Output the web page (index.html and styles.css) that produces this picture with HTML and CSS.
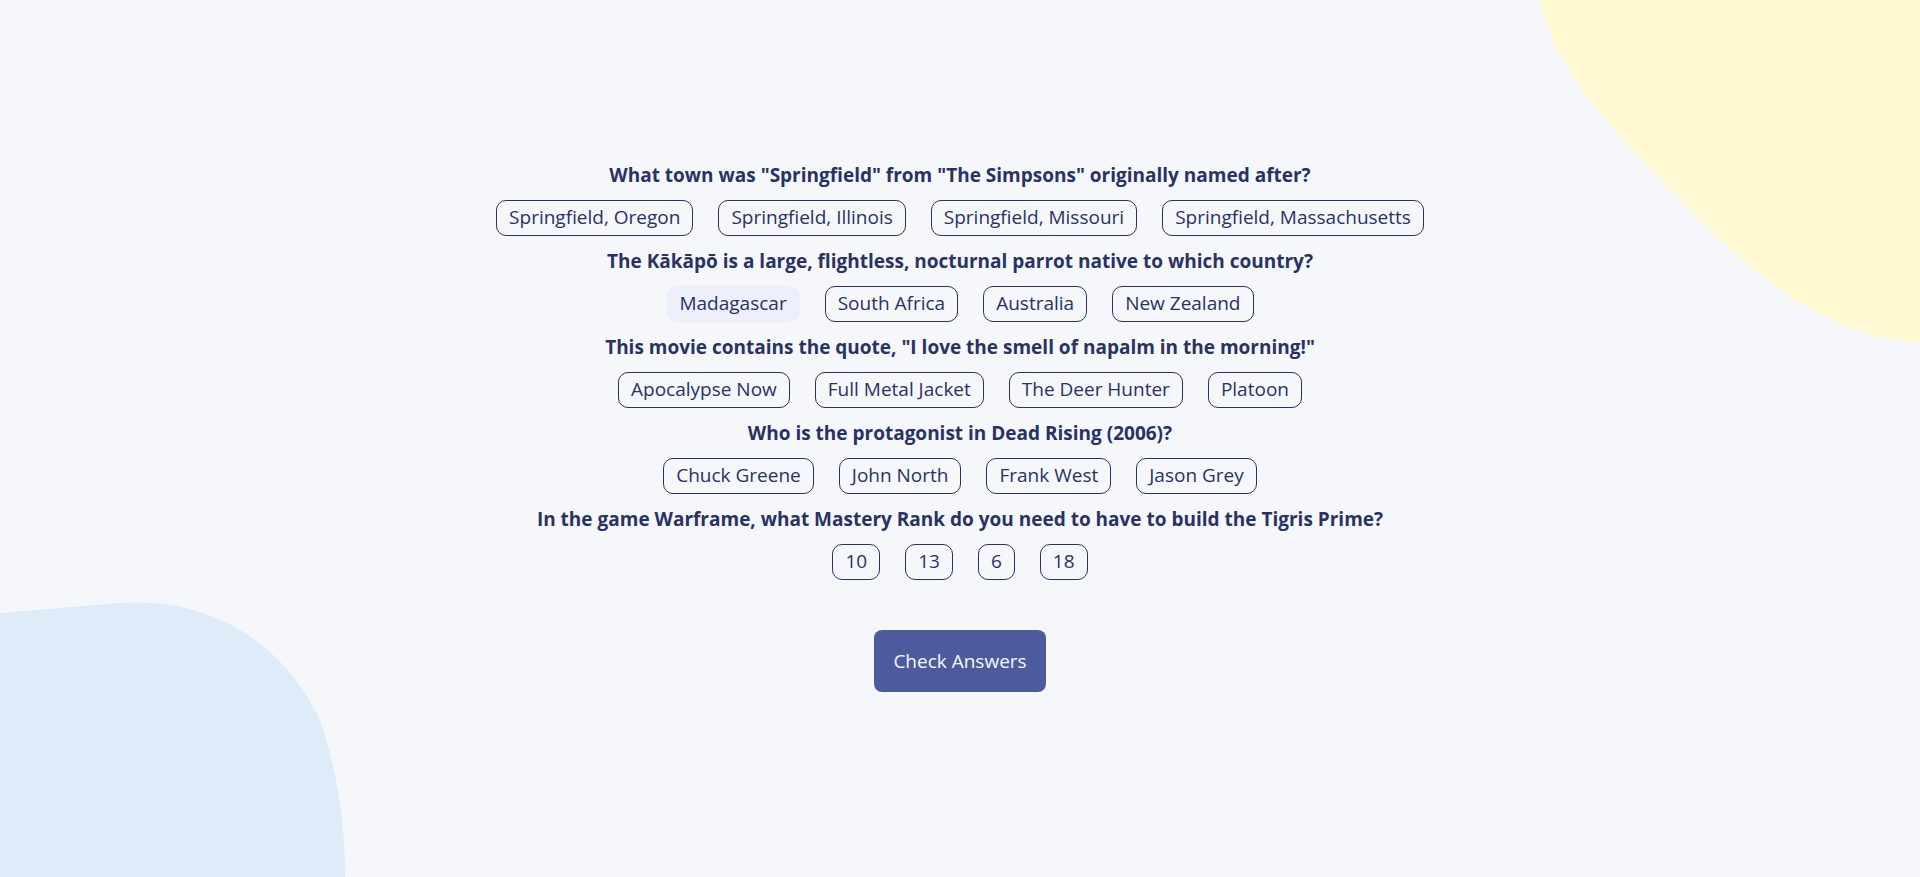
FILE: index.html
```html
<!DOCTYPE html>
<html lang="en">
<head>
<meta charset="utf-8">
<title>Quizzical</title>
<link rel="stylesheet" href="styles.css">
</head>
<body>
<svg class="blob blob-yellow" width="380" height="345" viewBox="1540 0 380 345" aria-hidden="true">
  <path d="M1540 0 C1556 80 1640 160 1720 240 C1790 305 1850 338 1920 342 L1920 0 Z" fill="#FFFAD1"/>
</svg>
<svg class="blob blob-blue" width="350" height="277" viewBox="0 600 350 277" aria-hidden="true">
  <path d="M0 613 L120 603 C150 601 260 598 320 720 C340 780 345 830 345 877 L0 877 Z" fill="#DEEBF8"/>
</svg>
<main class="quiz">
  <section class="question">
    <h2 class="q-title">What town was "Springfield" from "The Simpsons" originally named after?</h2>
    <div class="answers">
      <button class="answer">Springfield, Oregon</button>
      <button class="answer">Springfield, Illinois</button>
      <button class="answer">Springfield, Missouri</button>
      <button class="answer">Springfield, Massachusetts</button>
    </div>
  </section>
  <section class="question">
    <h2 class="q-title">The Kākāpō is a large, flightless, nocturnal parrot native to which country?</h2>
    <div class="answers">
      <button class="answer selected">Madagascar</button>
      <button class="answer">South Africa</button>
      <button class="answer">Australia</button>
      <button class="answer">New Zealand</button>
    </div>
  </section>
  <section class="question">
    <h2 class="q-title">This movie contains the quote, "I love the smell of napalm in the morning!"</h2>
    <div class="answers">
      <button class="answer">Apocalypse Now</button>
      <button class="answer">Full Metal Jacket</button>
      <button class="answer">The Deer Hunter</button>
      <button class="answer">Platoon</button>
    </div>
  </section>
  <section class="question">
    <h2 class="q-title">Who is the protagonist in Dead Rising (2006)?</h2>
    <div class="answers">
      <button class="answer">Chuck Greene</button>
      <button class="answer">John North</button>
      <button class="answer">Frank West</button>
      <button class="answer">Jason Grey</button>
    </div>
  </section>
  <section class="question">
    <h2 class="q-title">In the game Warframe, what Mastery Rank do you need to have to build the Tigris Prime?</h2>
    <div class="answers">
      <button class="answer">10</button>
      <button class="answer">13</button>
      <button class="answer">6</button>
      <button class="answer">18</button>
    </div>
  </section>
  <button class="check">Check Answers</button>
</main>
</body>
</html>
```
FILE: styles.css
```css
* { box-sizing: border-box; }
html, body {
  margin: 0;
  height: 877px;
  overflow: hidden;
  background: #F5F7FB;
  font-family: "Open Sans", "Noto Sans", sans-serif;
  color: #293264;
}
body { position: relative; }
.blob { position: absolute; display: block; }
.blob-yellow { top: 0; right: 0; }
.blob-blue { left: 0; bottom: 0; }

.quiz {
  position: relative;
  display: flex;
  flex-direction: column;
  align-items: center;
  padding-top: 164px;
}
.question {
  display: flex;
  flex-direction: column;
  align-items: center;
  margin-bottom: 14.5px;
}
.q-title {
  margin: 0 0 13px;
  font-size: 19px;
  line-height: 22.5px;
  font-weight: 700;
  text-align: center;
}
.answers {
  display: flex;
  justify-content: center;
  gap: 25px;
}
.answer {
  height: 36px;
  padding: 0 12px;
  border: 1px solid #293264;
  border-radius: 10px;
  background: transparent;
  color: #293264;
  font-family: inherit;
  font-size: 19px;
  line-height: 1;
  display: inline-flex;
  align-items: center;
}
.answer.selected {
  border-color: transparent;
  background: #EDF0FA;
}
.check {
  margin-top: 36px;
  width: 172px;
  height: 62px;
  border: none;
  border-radius: 8px;
  background: #4D5B9E;
  color: #F5F7FB;
  font-family: inherit;
  font-size: 19px;
}
```
